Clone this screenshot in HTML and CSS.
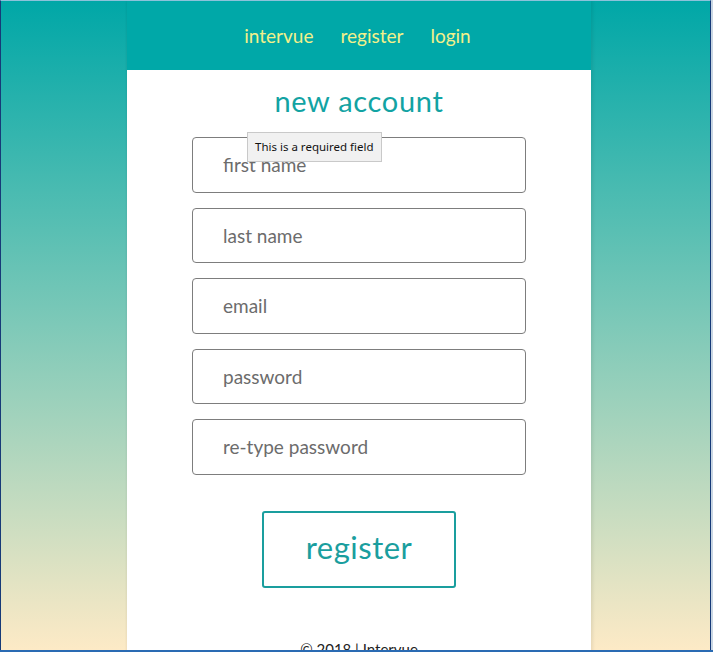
FILE: index.html
```html
<!DOCTYPE html>
<html>
<head>
<meta charset="utf-8">
<link rel="stylesheet" href="styles.css">
</head>
<body>
<div class="screen">
  <div class="page">
    <div class="container">
      <header class="header">
        <nav class="nav">
          <a class="nav-link">intervue</a>
          <a class="nav-link">register</a>
          <a class="nav-link">login</a>
        </nav>
      </header>
      <main class="main">
        <h1 class="title">new account</h1>
        <form class="form">
          <div class="field">
            <input class="input" placeholder="first name">
            <div class="tooltip">This is a required field</div>
          </div>
          <div class="field"><input class="input" placeholder="last name"></div>
          <div class="field"><input class="input" placeholder="email"></div>
          <div class="field"><input class="input" placeholder="password"></div>
          <div class="field"><input class="input" placeholder="re-type password"></div>
          <button class="btn" type="button">register</button>
        </form>
        <footer class="footer">© 2018 | Intervue</footer>
      </main>
    </div>
  </div>
  <div class="desk"></div>
</div>
</body>
</html>
```
FILE: styles.css
```css
html, body {
  margin: 0;
  padding: 0;
  height: 100%;
  overflow: hidden;
}
body {
  font-family: Lato, "Open Sans", sans-serif;
}
.screen {
  display: flex;
  height: 652px;
  width: 713px;
  box-sizing: border-box;
  border-bottom: 2px solid #2a6bb3;
  background: #c9d6e3;
}
.page {
  flex: 1;
  box-sizing: border-box;
  border-left: 1px solid #163a78;
  border-right: 1px solid #163a78;
  border-top: 1px solid #8cc2da;
  background: linear-gradient(#00a7a7, #7ec9b8 50%, #fdeac6);
  padding-left: 126px;
  overflow: hidden;
}
.desk {
  width: 2px;
}
.container {
  width: 464px;
  background: #fff;
  box-shadow: 2px 0 3px rgba(0, 0, 0, 0.08), -1px 0 2px rgba(0,0,0,0.05);
  min-height: 700px;
}
.header {
  background: #00a8a8;
  height: 69px;
  display: flex;
  align-items: center;
  justify-content: center;
}
.nav {
  display: flex;
  gap: 27px;
  margin-left: -3px;
}
.nav-link {
  color: #f3f08a;
  font-size: 19px;
  text-decoration: none;
}
.main {
  display: flex;
  flex-direction: column;
  align-items: center;
}
.title {
  margin: 14px 0 0;
  font-size: 29px;
  font-weight: 400;
  color: #12a3a3;
  letter-spacing: 0.7px;
  line-height: 34px;
}
.form {
  display: flex;
  flex-direction: column;
  align-items: center;
  margin-top: 19px;
  gap: 15px;
}
.field {
  position: relative;
}
.input {
  box-sizing: border-box;
  width: 334px;
  height: 55.5px;
  border: 1px solid #7d7d7d;
  border-radius: 4px;
  padding: 0 0 0 30px;
  font-family: Lato, sans-serif;
  font-size: 19px;
  color: #333;
  outline: none;
}
.input::placeholder {
  color: #6c6c6c;
}
.tooltip {
  position: absolute;
  left: 55px;
  top: -5px;
  background: #f1f1f1;
  border: 1px solid #c9c9c9;
  font-family: "Noto Sans", "DejaVu Sans", sans-serif;
  font-size: 11.5px;
  color: #111;
  padding: 6px 7px 7px;
  white-space: nowrap;
}
.btn {
  margin-top: 21px;
  box-sizing: border-box;
  width: 194px;
  height: 77px;
  background: #fff;
  border: 2px solid #1a9e9e;
  border-radius: 3px;
  color: #1a9e9e;
  font-family: Lato, sans-serif;
  font-size: 31px;
  letter-spacing: 0.5px;
  padding: 0 0 4px;
}
.footer {
  margin-top: 52px;
  font-size: 15px;
  color: #222;
}
```
